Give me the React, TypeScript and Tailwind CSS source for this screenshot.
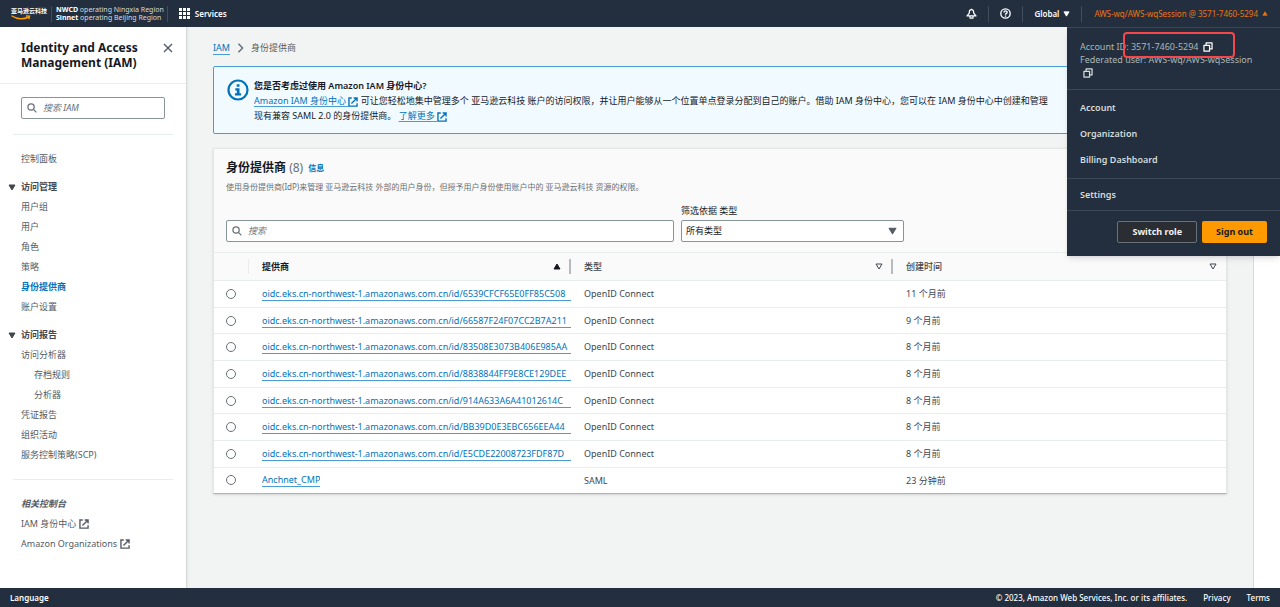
import { useState } from "react";
import type { ReactNode } from "react";

const PROVIDERS = [
  { name: "oidc.eks.cn-northwest-1.amazonaws.com.cn/id/6539CFCF65E0FF85C508", type: "OpenID Connect", created: "11 个月前" },
  { name: "oidc.eks.cn-northwest-1.amazonaws.com.cn/id/66587F24F07CC2B7A211", type: "OpenID Connect", created: "9 个月前" },
  { name: "oidc.eks.cn-northwest-1.amazonaws.com.cn/id/83508E3073B406E985AA", type: "OpenID Connect", created: "8 个月前" },
  { name: "oidc.eks.cn-northwest-1.amazonaws.com.cn/id/8838844FF9E8CE129DEE", type: "OpenID Connect", created: "8 个月前" },
  { name: "oidc.eks.cn-northwest-1.amazonaws.com.cn/id/914A633A6A41012614C", type: "OpenID Connect", created: "8 个月前" },
  { name: "oidc.eks.cn-northwest-1.amazonaws.com.cn/id/BB39D0E3EBC656EEA44", type: "OpenID Connect", created: "8 个月前" },
  { name: "oidc.eks.cn-northwest-1.amazonaws.com.cn/id/E5CDE22008723FDF87D", type: "OpenID Connect", created: "8 个月前" },
  { name: "Anchnet_CMP", type: "SAML", created: "23 分钟前" },
];

const NAV_GROUPS = [
  {
    title: "访问管理",
    items: [
      { label: "用户组" },
      { label: "用户" },
      { label: "角色" },
      { label: "策略" },
      { label: "身份提供商", active: true },
      { label: "账户设置" },
    ],
  },
  {
    title: "访问报告",
    items: [
      { label: "访问分析器" },
      { label: "存档规则", nested: true },
      { label: "分析器", nested: true },
      { label: "凭证报告" },
      { label: "组织活动" },
      { label: "服务控制策略(SCP)" },
    ],
  },
] as { title: string; items: { label: string; active?: boolean; nested?: boolean }[] }[];

function ExternalIcon({ className = "" }: { className?: string }) {
  return (
    <svg viewBox="0 0 16 16" className={`inline-block size-[10px] shrink-0 ${className}`} fill="none" stroke="currentColor" strokeWidth="2.2" aria-hidden="true">
      <path d="M6 1.5H1.5V14.5H14.5V10M9 1.5H14.5V7M14.5 1.5L5.5 10.5" />
    </svg>
  );
}

function CopyIcon() {
  return (
    <svg viewBox="0 0 16 16" className="size-[10px]" fill="none" stroke="currentColor" strokeWidth="2" strokeLinejoin="round" aria-hidden="true">
      <path d="M1.5 5.5H10.5V14.5H1.5ZM5 5.5V1.5H14.5V11H10.5" />
    </svg>
  );
}

function SearchIcon() {
  return (
    <svg viewBox="0 0 16 16" className="size-[10px] shrink-0 text-[#687078]" fill="none" stroke="currentColor" strokeWidth="2" aria-hidden="true">
      <circle cx="6.5" cy="6.5" r="5" />
      <path d="M10.2 10.2L15 15" />
    </svg>
  );
}

function Caret({ up = false, hollow = false, className = "" }: { up?: boolean; hollow?: boolean; className?: string }) {
  return (
    <svg viewBox="0 0 16 14" className={`shrink-0 ${className}`} fill={hollow ? "none" : "currentColor"} stroke="currentColor" strokeWidth="2" strokeLinejoin="round" aria-hidden="true">
      <path d={up ? "M8 2L14 12H2Z" : "M8 12L14 2H2Z"} />
    </svg>
  );
}

function SearchBox({ label, placeholder }: { label: string; placeholder: string }) {
  return (
    <div className="flex h-[22px] items-center gap-[6px] rounded-xs border border-[#879596] bg-white px-[5px]">
      <SearchIcon />
      <input
        type="search"
        aria-label={label}
        placeholder={placeholder}
        className="w-full min-w-0 bg-transparent text-[9px] text-[#16191f] outline-none placeholder:italic placeholder:text-[#687078]"
      />
    </div>
  );
}

function AccountMenu() {
  return (
    <div className="absolute top-full right-0 z-20 w-[213px] bg-[#232f3e] text-[9px] text-[#d5dbdb] shadow-md">
      <div className="border-y border-[#3b4754] px-[13px] pt-3 pb-[10px] leading-[13px] font-normal text-[#aab7b8]">
        <div className="flex items-center gap-1">
          <span>Account ID: 3571-7460-5294</span>
          <button type="button" aria-label="Copy account ID" className="text-white">
            <CopyIcon />
          </button>
        </div>
        <div>Federated user: AWS-wq/AWS-wqSession</div>
        <button type="button" aria-label="Copy federated user" className="ml-[3px] flex h-[13px] items-center text-[#d5dbdb]">
          <CopyIcon />
        </button>
        <div className="absolute top-[5px] left-[56px] h-[26px] w-[112px] rounded-sm border-2 border-[#f5484a]" />
      </div>
      <ul className="border-b border-[#3b4754] px-[13px] py-[5px] font-semibold">
        {["Account", "Organization", "Billing Dashboard"].map((item) => (
          <li key={item} className="flex h-[26px] items-center">
            <a href="#">{item}</a>
          </li>
        ))}
      </ul>
      <div className="flex h-8 items-center border-b border-[#3b4754] px-[13px] font-semibold">
        <a href="#">Settings</a>
      </div>
      <div className="flex justify-end gap-[5px] px-[13px] pt-[10px] pb-[13px] font-bold">
        <button type="button" className="h-[22px] rounded-xs border border-[#687078] bg-[#2a2e33] px-[14px] text-[#f2f3f3]">
          Switch role
        </button>
        <button type="button" className="h-[22px] rounded-xs bg-[#ff9900] px-[14px] text-[#16191f]">
          Sign out
        </button>
      </div>
    </div>
  );
}

function TopBar() {
  return (
    <header className="relative z-10 flex h-[27px] shrink-0 items-center bg-[#232f3e] text-[8px] font-semibold text-white">
      <a href="#" aria-label="亚马逊云科技" className="flex flex-col items-start pl-[11px] text-[6px] leading-[7px] font-bold">
        亚马逊云科技
        <svg viewBox="0 0 40 10" className="h-[5px] w-[20px]" fill="none" stroke="#ff9900" strokeWidth="3" strokeLinecap="round" aria-hidden="true">
          <path d="M2 2C12 9 26 9 35 4M31 2L37 2.5L36 7" />
        </svg>
      </a>
      <div className="ml-1 border-l border-[#414d5c] pl-1 text-[7px] leading-[8px] font-normal text-[#d5dbdb]">
        <div>
          <b className="text-white">NWCD</b> operating Ningxia Region
        </div>
        <div>
          <b className="text-white">Sinnet</b> operating Beijing Region
        </div>
      </div>
      <div className="ml-[3px] h-4 border-l border-[#414d5c]" />
      <button type="button" className="ml-[11px] flex items-center gap-[5px]">
        <svg viewBox="0 0 11 11" className="size-[11px]" fill="currentColor" aria-hidden="true">
          <path d="M0 0h3v3H0zM4 0h3v3H4zM8 0h3v3H8zM0 4h3v3H0zM4 4h3v3H4zM8 4h3v3H8zM0 8h3v3H0zM4 8h3v3H4zM8 8h3v3H8z" />
        </svg>
        Services
      </button>

      <div className="ml-auto flex h-4 items-center divide-x divide-[#414d5c]">
        <button type="button" aria-label="Notifications" className="flex h-4 items-center px-[11px]">
          <svg viewBox="0 0 16 16" className="size-[11px]" fill="none" stroke="currentColor" strokeWidth="1.8" strokeLinejoin="round" aria-hidden="true">
            <path d="M8 1V2.5M8 2.5C5.8 2.5 4.8 4 4.8 6.2V7.5L1.5 11.5H14.5L11.2 7.5V6.2C11.2 4 10.2 2.5 8 2.5ZM5.8 12V14.6H10.2V12" />
          </svg>
        </button>
        <button type="button" aria-label="Help" className="flex h-4 items-center px-[11px]">
          <svg viewBox="0 0 16 16" className="size-[11px]" fill="none" stroke="currentColor" strokeWidth="2" aria-hidden="true">
            <circle cx="8" cy="8" r="6.8" />
            <path d="M5.7 6.4C5.7 3.4 10.4 3.5 10.4 6.2C10.4 8 8 7.8 8 9.8M8 11V12.7" />
          </svg>
        </button>
        <button type="button" className="flex h-4 items-center gap-1 px-[11px]">
          Global
          <Caret className="h-[6px] w-[7px]" />
        </button>
        <button type="button" aria-expanded="true" className="flex h-4 items-center gap-1 px-3 font-normal text-[#ec7211]">
          AWS-wq/AWS-wqSession @ 3571-7460-5294
          <Caret up className="h-[5px] w-[6px]" />
        </button>
      </div>
      <AccountMenu />
    </header>
  );
}

function Sidebar() {
  return (
    <aside className="w-[187px] shrink-0 border-r border-[#d5dbdb] bg-white text-[#545b64] shadow-sm">
      <div className="flex items-start justify-between border-b border-[#eaeded] px-[21px] py-[13px]">
        <h2 className="text-[12px] leading-[15px] font-bold text-[#16191f]">
          Identity and Access
          <br />
          Management (IAM)
        </h2>
        <button type="button" aria-label="Close navigation" className="-mr-2 pt-[3px]">
          <svg viewBox="0 0 10 10" className="size-[10px]" fill="none" stroke="currentColor" strokeWidth="1.4" aria-hidden="true">
            <path d="M1 1L9 9M9 1L1 9" />
          </svg>
        </button>
      </div>
      <div className="px-[13px]">
        <div className="border-b border-[#eaeded] px-2 pt-[13px] pb-[15px]">
          <SearchBox label="搜索 IAM" placeholder="搜索 IAM" />
        </div>
      </div>
      <nav className="px-[13px] pt-[14px] leading-5">
        <a href="#" className="block pl-2">
          控制面板
        </a>
        {NAV_GROUPS.map((group) => (
          <div key={group.title} className="pt-2">
            <button type="button" className="-ml-[5px] flex h-5 items-center gap-[5px] font-semibold text-[#414750]">
              <Caret className="h-[7px] w-2" />
              {group.title}
            </button>
            <ul>
              {group.items.map((item) => (
                <li key={item.label} className={item.nested ? "pl-[21px]" : "pl-2"}>
                  <a
                    href="#"
                    aria-current={item.active ? "page" : undefined}
                    className={item.active ? "block font-bold text-[#0073bb]" : "block"}
                  >
                    {item.label}
                  </a>
                </li>
              ))}
            </ul>
          </div>
        ))}
        <div className="mt-[14px] border-t border-[#eaeded] pt-[14px] pl-2">
          <h3 className="font-semibold italic">相关控制台</h3>
          {["IAM 身份中心", "Amazon Organizations"].map((label) => (
            <a key={label} href="#" className="flex items-center gap-[3px]">
              {label}
              <ExternalIcon />
            </a>
          ))}
        </div>
      </nav>
    </aside>
  );
}

function TextLink({ children }: { children: ReactNode }) {
  return (
    <a href="#" className="text-[#0073bb] underline decoration-[#4a9dd0] decoration-1 underline-offset-2">
      {children}
    </a>
  );
}

function InfoBanner() {
  return (
    <section className="flex gap-[5px] rounded-xs border border-[#4a9dd0] bg-[#f1faff] px-[13px] pt-[11px] pb-[10px]">
      <svg viewBox="0 0 22 22" className="mt-[1px] size-[22px] shrink-0" fill="none" aria-hidden="true">
        <circle cx="11" cy="11" r="9.5" stroke="#0073bb" strokeWidth="2.2" />
        <path d="M9.7 5.2h2.8v2.6H9.7zM8.3 9.2h4.2v5h1.6v2.2H8v-2.2h1.8v-2.8H8.3z" fill="#0073bb" />
      </svg>
      <div className="min-w-0 overflow-hidden leading-[15px] whitespace-nowrap">
        <div className="font-semibold">您是否考虑过使用 Amazon IAM 身份中心?</div>
        <div>
          <TextLink>Amazon IAM 身份中心 </TextLink>
          <ExternalIcon className="text-[#0073bb]" /> 可让您轻松地集中管理多个 亚马逊云科技
          账户的访问权限，并让用户能够从一个位置单点登录分配到自己的账户。借助 IAM 身份中心，您可以在 IAM
          身份中心中创建和管理
        </div>
        <div>
          现有兼容 SAML 2.0 的身份提供商。 <TextLink>了解更多 </TextLink>
          <ExternalIcon className="text-[#0073bb]" />
        </div>
      </div>
    </section>
  );
}

function ProvidersTable({ selected, onSelect }: { selected: string; onSelect: (name: string) => void }) {
  return (
    <table className="h-[241px] w-full table-fixed border-collapse text-left">
      <thead className="bg-[#fafafa]">
        <tr className="h-7 border-y border-[#eaeded]">
          <th className="w-[35px]" aria-label="选择">
            <div className="h-[15px] border-r border-[#eaeded]" />
          </th>
          <th className="w-[322px] font-bold" aria-sort="ascending">
            <div className="flex h-[15px] items-center justify-between border-r-2 border-[#b5bcbf] pr-2 pl-[13px]">
              提供商
              <Caret up className="h-[7px] w-2" />
            </div>
          </th>
          <th className="w-[322px] font-medium text-[#414750]">
            <div className="flex h-[15px] items-center justify-between border-r-2 border-[#b5bcbf] pr-2 pl-[13px]">
              类型
              <Caret hollow className="h-[7px] w-2" />
            </div>
          </th>
          <th className="font-medium text-[#414750]">
            <div className="flex h-[15px] items-center justify-between pr-[9px] pl-[13px]">
              创建时间
              <Caret hollow className="h-[7px] w-2" />
            </div>
          </th>
        </tr>
      </thead>
      <tbody className="bg-white text-[#414750]">
        {PROVIDERS.map((provider) => (
          <tr key={provider.name} className="border-b border-[#eaeded] last:border-b-0">
            <td className="pl-3">
              <input
                type="radio"
                name="provider"
                aria-label={provider.name}
                checked={selected === provider.name}
                onChange={() => onSelect(provider.name)}
                className="block size-[10px] appearance-none rounded-full border border-[#687078] bg-white checked:border-[3px] checked:border-[#0073bb]"
              />
            </td>
            <td className="pl-[13px]">
              <a
                href="#"
                className={[
                  "block overflow-hidden border-b border-[#4a9dd0] leading-[13px] whitespace-nowrap text-[#0073bb]",
                  provider.type === "SAML" ? "w-fit" : "w-full",
                ].join(" ")}
              >
                {provider.name}
              </a>
            </td>
            <td className="pl-[13px]">{provider.type}</td>
            <td className="pl-[13px]">{provider.created}</td>
          </tr>
        ))}
      </tbody>
    </table>
  );
}

export default function App() {
  const [selected, setSelected] = useState("");
  const [type, setType] = useState("all");

  return (
    <div className="flex min-h-screen flex-col bg-[#f2f3f3] font-['Noto_Sans','Noto_Sans_CJK_SC',sans-serif] text-[9px] text-[#16191f]">
      <TopBar />
      <div className="flex flex-1">
        <Sidebar />
        <main className="min-w-0 flex-1 px-[26px] pt-[13px] pb-8">
          <nav aria-label="Breadcrumb" className="flex h-[15px] items-center gap-[7px] text-[#545b64]">
            <a href="#" className="border-b border-[#4a9dd0] leading-[13px] text-[#0073bb]">
              IAM
            </a>
            <svg viewBox="0 0 8 12" className="h-[10px] w-[7px]" fill="none" stroke="#687078" strokeWidth="1.8" aria-hidden="true">
              <path d="M1.5 1L6.5 6L1.5 11" />
            </svg>
            <span>身份提供商</span>
          </nav>
          <div className="mt-[11px]">
            <InfoBanner />
          </div>
          <section className="mt-[14px] border border-[#e2e6e6] border-b-[#aab7b8] bg-[#fafafa] shadow-sm">
            <div className="px-3 pt-[11px] pb-[10px]">
              <div className="flex items-center gap-[5px]">
                <h1 className="text-[12px] leading-4 font-bold">
                  身份提供商 <span className="font-normal text-[#687078]">(8)</span>
                </h1>
                <a href="#" className="text-[8px] font-bold text-[#0073bb]">
                  信息
                </a>
              </div>
              <p className="mt-1 text-[8px] leading-[13px] text-[#687078]">
                使用身份提供商(IdP)来管理 亚马逊云科技 外部的用户身份，但授予用户身份使用账户中的 亚马逊云科技 资源的权限。
              </p>
              <div className="mt-[11px] flex items-end gap-[7px]">
                <div className="w-[448px]">
                  <SearchBox label="搜索身份提供商" placeholder="搜索" />
                </div>
                <div className="w-[223px]">
                  <label htmlFor="type-filter" className="block pb-[3px] leading-[13px]">
                    筛选依据 类型
                  </label>
                  <div className="relative">
                    <select
                      id="type-filter"
                      value={type}
                      onChange={(e) => setType(e.target.value)}
                      className="block h-[22px] w-full appearance-none rounded-xs border border-[#879596] bg-white px-1 text-[9px]"
                    >
                      <option value="all">所有类型</option>
                      <option value="oidc">OpenID Connect</option>
                      <option value="saml">SAML</option>
                    </select>
                    <Caret className="pointer-events-none absolute top-[7px] right-[7px] h-2 w-[9px] text-[#545b64]" />
                  </div>
                </div>
              </div>
            </div>
            <ProvidersTable selected={selected} onSelect={setSelected} />
          </section>
        </main>
        <div className="w-[27px] shrink-0 border-l border-[#d5dbdb] bg-white" />
      </div>
      <footer className="flex h-[19px] shrink-0 items-center gap-4 bg-[#232f3e] px-[10px] text-[8px] font-medium text-white">
        <button type="button" className="font-semibold">
          Language
        </button>
        <span className="ml-auto">© 2023, Amazon Web Services, Inc. or its affiliates.</span>
        <a href="#">Privacy</a>
        <a href="#">Terms</a>
      </footer>
    </div>
  );
}
